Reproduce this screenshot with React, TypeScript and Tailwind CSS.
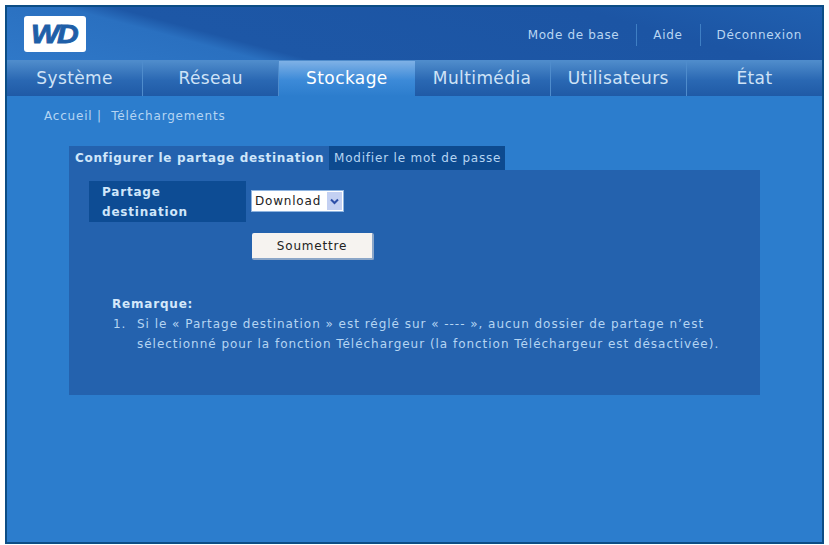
const TABS = ['Système', 'Réseau', 'Stockage', 'Multimédia', 'Utilisateurs', 'État'];

function Logo() {
  return (
    <div className="w-[62px] h-[36px] bg-white rounded-[3px] flex items-center justify-center">
      <span className="font-['Liberation_Sans',sans-serif] font-bold italic text-[25px] leading-none tracking-[-2px] text-[#1f5fa8] [-webkit-text-stroke:0.8px_#1f5fa8] scale-x-[1.2] pr-[2px]">
        WD
      </span>
    </div>
  );
}

function TopLink({ label, divider }: { label: string; divider?: boolean }) {
  return (
    <span className={divider ? 'border-l border-[#3f7fc4] h-[22px] flex items-center pl-[16px]' : 'h-[22px] flex items-center'}>
      {label}
    </span>
  );
}

export default function App() {
  return (
    <div className="w-[829px] h-[545px] bg-white pt-[5px] pl-[5px] pr-[5px] pb-[1px] overflow-hidden font-['DejaVu_Sans',sans-serif]">
      <div className="h-full border-2 border-[#0c4d85] bg-[#2c7dcd] flex flex-col">
        {/* Header */}
        <div className="h-[53px] shrink-0 pl-[17px] pr-[20px] pt-[9px] flex justify-between bg-[linear-gradient(15deg,#2f78c8_0%,#2a70c0_25%,#1d57a6_30%,#1c55a4_75%,#2060b0_100%)]">
          <Logo />
          <div className="flex items-start gap-[17px] pt-[8px] text-[12px] tracking-[0.65px] text-[#b9d6f2]">
            <TopLink label="Mode de base" />
            <TopLink label="Aide" divider />
            <TopLink label="Déconnexion" divider />
          </div>
        </div>

        {/* Navigation */}
        <nav className="h-[36px] shrink-0 flex border-t border-[#4f8ccc]">
          {TABS.map((tab) => (
            <div
              key={tab}
              className={
                tab === 'Stockage'
                  ? 'flex-1 flex items-center justify-center text-[17px] tracking-[0.4px] text-white bg-[linear-gradient(#7fb1e6,#3c8ad8_55%,#2c7dcd)]'
                  : 'flex-1 flex items-center justify-center text-[17px] tracking-[0.4px] text-[#cfe3f7] border-r border-[#4f8ccc] last:border-r-0 bg-[linear-gradient(#4f8ccb,#2a68b3_55%,#1f5aa6)]'
              }
            >
              {tab}
            </div>
          ))}
        </nav>

        {/* Breadcrumb */}
        <div className="pl-[37px] pt-[11px] h-[50px] shrink-0 text-[12px] tracking-[0.8px] text-[#b5d5f3]">
          Accueil&nbsp;|&nbsp;&nbsp;Téléchargements
        </div>

        <div className="ml-[62px] w-[691px] text-[12px] tracking-[0.8px]">
          {/* Tabs */}
          <div className="flex h-[24px]">
            <div className="w-[260px] pl-[6px] flex items-center font-bold tracking-[0.67px] text-[#cfe6fa] bg-[#2462ae] whitespace-nowrap">
              Configurer le partage destination
            </div>
            <div className="w-[176px] pl-[5px] flex items-center text-[#b5d5f3] bg-[#0d4a8f] whitespace-nowrap">
              Modifier le mot de passe
            </div>
          </div>

          {/* Panel */}
          <div className="h-[225px] bg-[#2462ae] pt-[11px] pl-[20px]">
            <div className="flex items-start gap-[5px]">
              <div className="w-[157px] h-[41px] bg-[#0d4c94] pl-[13px] pr-[20px] pt-[1px] font-bold text-[#cfe6fa] leading-[20px]">
                Partage destination
              </div>
              <div className="mt-[9px] w-[93px] h-[22px] bg-white border border-[#8fb4e0] flex items-center justify-between pl-[3px] pr-[1px] text-[#222]">
                <span>Download</span>
                <span className="w-[15px] h-[18px] bg-[#c3d0f2] flex items-center justify-center">
                  <svg width="9" height="7" viewBox="0 0 9 7">
                    <path d="M1 1.5 4.5 5 8 1.5" fill="none" stroke="#2d4fa8" strokeWidth="2" />
                  </svg>
                </span>
              </div>
            </div>
            <button className="block ml-[163px] mt-[11px] w-[122px] h-[27px] rounded-[2px] bg-[#f6f3f0] border-b-2 border-r-2 border-[#8ba6c8] text-[12px] tracking-[0.8px] text-[#222]">
              Soumettre
            </button>
            <div className="ml-[23px] mt-[34px] text-[#b5d5f3] leading-[20px] tracking-[0.97px]">
              <div className="font-bold text-[#d4e8fa] tracking-[0.8px]">Remarque:</div>
              <div className="flex">
                <span className="w-[25px] shrink-0 pl-[1px]">1.</span>
                <span className="w-[600px]">
                  Si le « Partage destination » est réglé sur « ---- », aucun dossier de partage n’est sélectionné pour la fonction Téléchargeur (la fonction Téléchargeur est désactivée).
                </span>
              </div>
            </div>
          </div>
        </div>
      </div>
    </div>
  );
}
